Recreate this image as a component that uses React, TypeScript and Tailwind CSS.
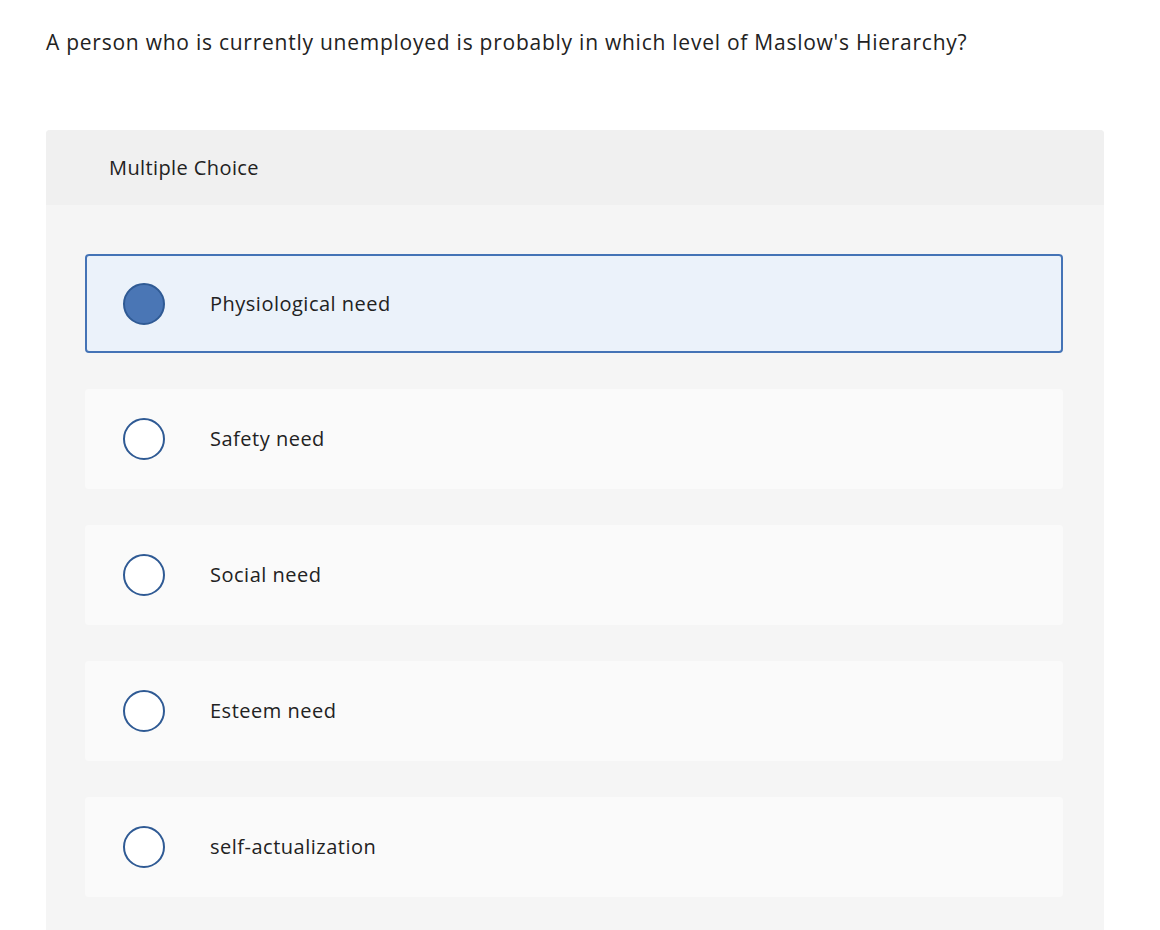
const choices = [
  "Physiological need",
  "Safety need",
  "Social need",
  "Esteem need",
  "self-actualization",
];

function Radio({ checked }: { checked: boolean }) {
  return (
    <span
      className={`h-[42px] w-[42px] shrink-0 rounded-full border-2 ${
        checked ? "border-[#2f5a94] bg-[#4a76b5]" : "border-[#2f5a94] bg-white"
      }`}
    />
  );
}

export default function App() {
  const selected = 0;

  return (
    <div className="min-h-[930px] bg-white pl-[46px] pr-[56px] font-['Open_Sans',sans-serif] text-[#222]">
      <p className="pt-[25px] text-[21px] leading-[34px] tracking-[0.75px]">
        A person who is currently unemployed is probably in which level of Maslow's Hierarchy?
      </p>

      <div className="mt-[71px] overflow-hidden rounded-t-[4px] bg-[#f5f5f5]">
        <div className="flex h-[75px] items-center bg-[#f0f0f0] pl-[63px] text-[20px] tracking-[0.4px]">
          Multiple Choice
        </div>
        <div className="flex flex-col gap-[36px] pb-[40px] pl-[39px] pr-[41px] pt-[49px]">
          {choices.map((c, i) => (
            <div
              key={c}
              className={`flex items-center rounded-[4px] ${
                i === selected
                  ? "h-[99px] border-2 border-[#4473b6] bg-[#ebf2fa] pl-[36px]"
                  : "h-[100px] bg-[#fafafa] pl-[38px]"
              }`}
            >
              <Radio checked={i === selected} />
              <span className="ml-[45px] text-[20px] tracking-[0.5px]">{c}</span>
            </div>
          ))}
        </div>
      </div>
    </div>
  );
}
